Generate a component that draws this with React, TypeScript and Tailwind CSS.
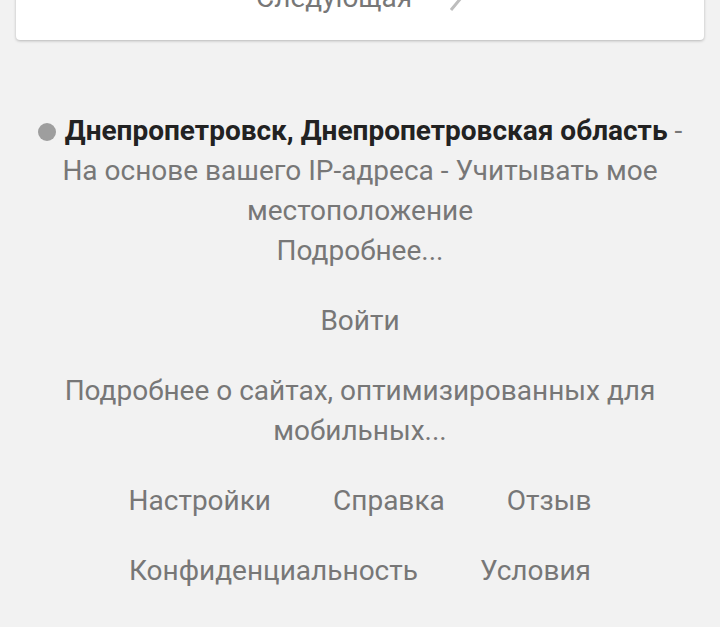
export default function App() {
  return (
    <div className="min-h-[627px] bg-[#f2f2f2] font-['Roboto',sans-serif] text-[28px] text-[#777777] overflow-hidden">
      {/* pager card, scrolled mostly out of view */}
      <div className="mx-4 -mt-[40px] h-[80px] bg-white rounded-b-[4px] shadow-[0_1px_3px_rgba(0,0,0,0.25)] flex items-center justify-center">
        <span className="leading-[40px] mt-[-4px]">Следующая</span>
        <svg width="16" height="30" viewBox="0 0 16 30" className="ml-[36px] mt-[-4px]">
          <polyline points="3,3 13,15 3,27" fill="none" stroke="#bdbdbd" strokeWidth="3" />
        </svg>
      </div>

      <div className="pt-[71px] px-[20px] text-center leading-[40px]">
        <div>
          <span className="inline-block w-[18px] h-[18px] rounded-full bg-[#9e9e9e] mr-[9px] align-[-1px]" />
          <span className="font-bold text-[#222222]">Днепропетровск, Днепропетровская область</span>
          <span> - </span>
          <span>На основе вашего IP-адреса</span>
          <span> - </span>
          <span>Учитывать мое местоположение</span>
        </div>
        <div>Подробнее...</div>
      </div>

      <div className="mt-[30px] text-center leading-[40px]">Войти</div>

      <div className="mt-[30px] px-[40px] text-center leading-[40px]">
        Подробнее о сайтах, оптимизированных для мобильных...
      </div>

      <div className="mt-[30px] flex justify-center gap-[62px] leading-[40px]">
        <span>Настройки</span>
        <span>Справка</span>
        <span>Отзыв</span>
      </div>
      <div className="mt-[30px] flex justify-center gap-[62px] leading-[40px]">
        <span>Конфиденциальность</span>
        <span>Условия</span>
      </div>
    </div>
  );
}
